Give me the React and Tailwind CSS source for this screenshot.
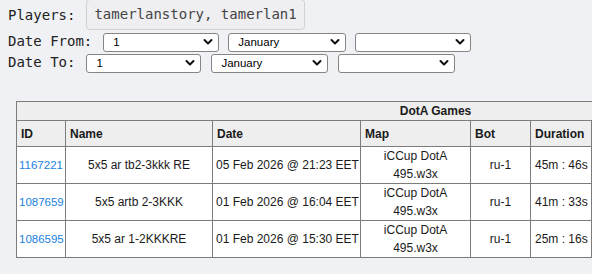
import React from 'react';

const mono = { fontFamily: '"DejaVu Sans Mono", "Liberation Mono", monospace' };

const games = [
  { id: '1167221', name: '5x5 ar tb2-3kkk RE', date: '05 Feb 2026 @ 21:23 EET', bot: 'ru-1', dur: '45m : 46s' },
  { id: '1087659', name: '5x5 artb 2-3KKK', date: '01 Feb 2026 @ 16:04 EET', bot: 'ru-1', dur: '41m : 33s' },
  { id: '1086595', name: '5x5 ar 1-2KKKRE', date: '01 Feb 2026 @ 15:30 EET', bot: 'ru-1', dur: '25m : 16s' },
];

const Chevron = () => (
  <svg width="10" height="7" viewBox="0 0 10 7" className="absolute right-[6px] top-1/2 -translate-y-1/2 pointer-events-none">
    <path d="M1.5 1.5 L5 5 L8.5 1.5" fill="none" stroke="#111" strokeWidth="2" strokeLinecap="round" strokeLinejoin="round" />
  </svg>
);

const Select = ({ width, value, options }) => (
  <div className={`relative ${width}`}>
    <select
      defaultValue={value}
      className="w-full h-[19px] appearance-none bg-white border border-[#858585] rounded-[3px] pl-[9px] pr-5 text-[11.5px] leading-[17px] text-black font-['Liberation_Sans',sans-serif]"
    >
      {options.map(o => <option key={o}>{o}</option>)}
    </select>
    <Chevron />
  </div>
);

const days = Array.from({ length: 31 }, (_, i) => String(i + 1));
const months = ['January', 'February', 'March', 'April', 'May', 'June', 'July', 'August', 'September', 'October', 'November', 'December'];
const years = ['', '2024', '2025', '2026'];

export default function App() {
  return (
    <div className="w-[592px] h-[274px] overflow-hidden bg-[#f0f1f4] text-[#222]">
      <div className="px-2" style={mono}>
        {/* players */}
        <div className="flex items-center h-[30px] text-[14px]">
          <span>Players:</span>
          <div className="ml-[11px] -mt-[2px] h-[31px] w-[219px] shrink-0 whitespace-nowrap flex items-center pl-[7px] bg-[#efeff1] border border-[#d2d2d4] rounded-[4px] text-[#444]">
            tamerlanstory, tamerlan1
          </div>
        </div>

        {/* date from */}
        <div className="flex items-center mt-[2px] h-[19px] text-[14px]">
          <span>Date From:</span>
          <div className="ml-[11px] flex gap-[9px]">
            <Select width="w-[116px]" value="1" options={days} />
            <Select width="w-[118px]" value="January" options={months} />
            <Select width="w-[116px]" value="" options={years} />
          </div>
        </div>

        {/* date to */}
        <div className="flex items-center mt-[2px] h-[19px] text-[14px]">
          <span>Date To:</span>
          <div className="ml-[11px] flex gap-[10px]">
            <Select width="w-[115px]" value="1" options={days} />
            <Select width="w-[117px]" value="January" options={months} />
            <Select width="w-[117px]" value="" options={years} />
          </div>
        </div>
      </div>

      <table className="ml-4 mt-[29px] w-[838px] table-fixed border-collapse text-[12px] leading-[18px] text-[#1a1a1a] font-['Liberation_Sans',Arial,sans-serif]">
        <colgroup>
          <col className="w-[49px]" />
          <col className="w-[147px]" />
          <col className="w-[148px]" />
          <col className="w-[110px]" />
          <col className="w-[60px]" />
          <col className="w-[61px]" />
          <col className="w-[90px]" />
          <col className="w-[100px]" />
          <col className="w-[73px]" />
        </colgroup>
        <thead>
          <tr className="h-[19px] bg-[#eeeeee]">
            <th colSpan={9} className="border border-[#7c7c7c] font-bold text-center p-0">DotA Games</th>
          </tr>
          <tr className="h-[26px] bg-[#eeeeee]">
            {['ID', 'Name', 'Date', 'Map', 'Bot', 'Duration', 'Winner', 'Players', 'Replay'].map(h => (
              <th key={h} className="border border-[#7c7c7c] font-bold text-left px-[4px] py-0">{h}</th>
            ))}
          </tr>
        </thead>
        <tbody className="bg-white">
          {games.map(g => (
            <tr key={g.id} className="h-[37px]">
              <td className="border border-[#7c7c7c] pl-[2px] pr-0 py-0 text-[11.5px]">
                <a href="#" className="text-[#1a7fe0]">{g.id}</a>
              </td>
              <td className="border border-[#7c7c7c] text-center px-1 py-0">{g.name}</td>
              <td className="border border-[#7c7c7c] px-[3px] py-0 whitespace-nowrap">{g.date}</td>
              <td className="border border-[#7c7c7c] text-center px-1 py-0">iCCup DotA<br />495.w3x</td>
              <td className="border border-[#7c7c7c] text-center px-1 py-0">{g.bot}</td>
              <td className="border border-[#7c7c7c] px-[4px] py-0 whitespace-nowrap">{g.dur}</td>
              <td className="border border-[#7c7c7c] text-center px-1 py-0">Sentinel</td>
              <td className="border border-[#7c7c7c] text-center px-1 py-0">10</td>
              <td className="border border-[#7c7c7c] text-center px-1 py-0">
                <a href="#" className="text-[#1a7fe0]">w3g</a>
              </td>
            </tr>
          ))}
        </tbody>
      </table>
    </div>
  );
}
